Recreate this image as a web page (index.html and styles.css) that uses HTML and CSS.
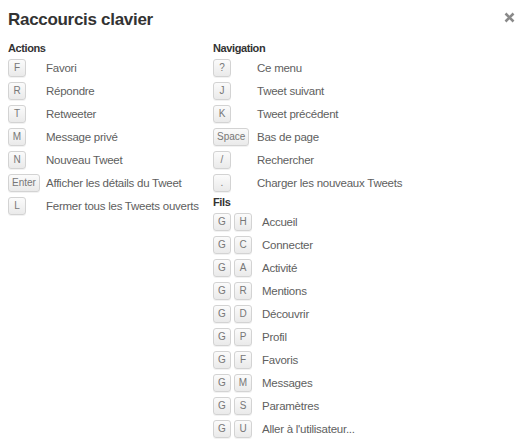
FILE: index.html
```html
<!DOCTYPE html>
<html lang="fr">
<head>
<meta charset="utf-8">
<title>Raccourcis clavier</title>
<link rel="stylesheet" href="styles.css">
</head>
<body>
<div class="dialog">
  <div class="header">
    <h1 class="title">Raccourcis clavier</h1>
    <span class="close" aria-label="Fermer">
      <svg width="11" height="11" viewBox="0 0 11 11"><path d="M1.5 1.5 L9.5 9.5 M9.5 1.5 L1.5 9.5" stroke="#8a8a8a" stroke-width="2.6" stroke-linecap="butt"/></svg>
    </span>
  </div>
  <div class="columns">
    <div class="col col-left">
      <h2 class="section">Actions</h2>
      <div class="list list-actions">
        <div class="keys"><span class="key">F</span></div><div class="label">Favori</div>
        <div class="keys"><span class="key">R</span></div><div class="label">Répondre</div>
        <div class="keys"><span class="key">T</span></div><div class="label">Retweeter</div>
        <div class="keys"><span class="key">M</span></div><div class="label">Message privé</div>
        <div class="keys"><span class="key">N</span></div><div class="label">Nouveau Tweet</div>
        <div class="keys"><span class="key">Enter</span></div><div class="label">Afficher les détails du Tweet</div>
        <div class="keys"><span class="key">L</span></div><div class="label">Fermer tous les Tweets ouverts</div>
      </div>
    </div>
    <div class="col col-right">
      <h2 class="section">Navigation</h2>
      <div class="list list-nav">
        <div class="keys"><span class="key">?</span></div><div class="label">Ce menu</div>
        <div class="keys"><span class="key">J</span></div><div class="label">Tweet suivant</div>
        <div class="keys"><span class="key">K</span></div><div class="label">Tweet précédent</div>
        <div class="keys"><span class="key">Space</span></div><div class="label">Bas de page</div>
        <div class="keys"><span class="key">/</span></div><div class="label">Rechercher</div>
        <div class="keys"><span class="key">.</span></div><div class="label">Charger les nouveaux Tweets</div>
      </div>
      <h2 class="section section-fils">Fils</h2>
      <div class="list list-fils">
        <div class="keys"><span class="key">G</span><span class="key">H</span></div><div class="label">Accueil</div>
        <div class="keys"><span class="key">G</span><span class="key">C</span></div><div class="label">Connecter</div>
        <div class="keys"><span class="key">G</span><span class="key">A</span></div><div class="label">Activité</div>
        <div class="keys"><span class="key">G</span><span class="key">R</span></div><div class="label">Mentions</div>
        <div class="keys"><span class="key">G</span><span class="key">D</span></div><div class="label">Découvrir</div>
        <div class="keys"><span class="key">G</span><span class="key">P</span></div><div class="label">Profil</div>
        <div class="keys"><span class="key">G</span><span class="key">F</span></div><div class="label">Favoris</div>
        <div class="keys"><span class="key">G</span><span class="key">M</span></div><div class="label">Messages</div>
        <div class="keys"><span class="key">G</span><span class="key">S</span></div><div class="label">Paramètres</div>
        <div class="keys"><span class="key">G</span><span class="key">U</span></div><div class="label">Aller à l'utilisateur...</div>
      </div>
    </div>
  </div>
</div>
</body>
</html>
```
FILE: styles.css
```css
html, body {
  margin: 0;
  padding: 0;
  background: #ffffff;
}
body {
  font-family: "Liberation Sans", Arial, sans-serif;
  color: #555;
}
.dialog {
  width: 525px;
  height: 448px;
  box-sizing: border-box;
  padding: 8px 8px 0 8px;
}
.header {
  display: flex;
  justify-content: space-between;
  align-items: center;
  height: 24px;
}
.title {
  margin: 0;
  font-size: 17px;
  font-weight: bold;
  color: #333;
  line-height: 24px;
  letter-spacing: -0.3px;
}
.close {
  display: flex;
  margin-right: 2px;
  margin-top: -6px;
}
.columns {
  display: flex;
  margin-top: 8px;
}
.col-left {
  width: 205px;
}
.col-right {
  flex: 1;
}
.section {
  margin: 0 0 3px 0;
  font-size: 11px;
  font-weight: bold;
  color: #333;
  line-height: 16px;
  letter-spacing: -0.4px;
}
.section-fils {
  margin-top: 2px;
}
.list {
  display: grid;
  row-gap: 5px;
  align-items: center;
}
.list-actions {
  grid-template-columns: 38px 1fr;
}
.list-nav {
  grid-template-columns: 44px 1fr;
}
.list-fils {
  grid-template-columns: 49px 1fr;
}
.keys {
  display: flex;
  gap: 3px;
}
.key {
  display: inline-flex;
  align-items: center;
  justify-content: center;
  min-width: 18px;
  height: 18px;
  box-sizing: border-box;
  padding: 0 3px;
  border: 1px solid #d3d3d3;
  border-radius: 3px;
  background: linear-gradient(#fbfbfb, #eaeaea);
  box-shadow: 0 1px 0 #f2f2f2;
  font-size: 10px;
  color: #777;
  line-height: 1;
}
.label {
  font-size: 11.5px;
  line-height: 18px;
  color: #606060;
  white-space: nowrap;
  letter-spacing: -0.25px;
}
```
